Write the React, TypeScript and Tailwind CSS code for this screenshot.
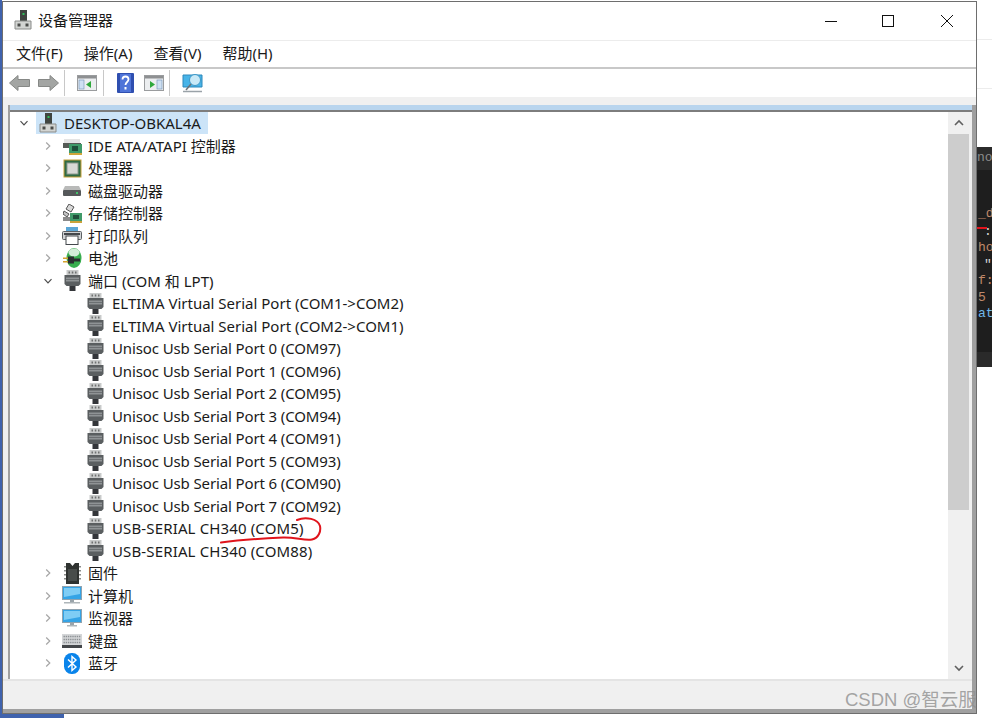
import React from 'react';

const Chevron = ({ open }: { open?: boolean }) => (
  <svg width="10" height="10" viewBox="0 0 10 10" fill="none" stroke={open ? '#4d4d4d' : '#a6a6a6'} strokeWidth="1.2">
    {open ? <path d="M1.5 3.2 5 6.8 8.5 3.2" /> : <path d="M3.2 1.5 6.8 5 3.2 8.5" />}
  </svg>
);

const ComputerIcon = () => (
  <svg width="18" height="20" viewBox="0 0 18 20">
    <rect x="6" y="0" width="7" height="11" fill="#3f4440" />
    <rect x="8.5" y="3" width="2" height="2" fill="#2fc05a" />
    <path d="M1 11h16v8H1z" fill="#d2d4d2" stroke="#8a8c8a" />
    <rect x="3.5" y="13.5" width="3" height="3" fill="#4a4c4a" />
    <rect x="11.5" y="13.5" width="3" height="3" fill="#4a4c4a" />
  </svg>
);

const IdeIcon = () => (
  <svg width="19" height="18" viewBox="0 0 19 18">
    <path d="M1 2h16v5H1z" fill="#e4e4e4" />
    <path d="M0 6h18v5H0z" fill="#555a56" />
    <rect x="6" y="7" width="13" height="9" fill="#3f9a69" />
    <rect x="9" y="9" width="6" height="5" fill="#1f4f3a" />
    <path d="M6 16h13v2H6z" fill="#d0a63a" />
  </svg>
);

const CpuIcon = () => (
  <svg width="19" height="19" viewBox="0 0 19 19">
    <rect x="0.5" y="0.5" width="18" height="18" fill="#c6a03a" />
    <rect x="1.5" y="1.5" width="16" height="16" fill="#2f6b45" />
    <rect x="4" y="4" width="11" height="11" fill="#d8d9d6" stroke="#8e9a90" />
  </svg>
);

const DiskIcon = () => (
  <svg width="18" height="10" viewBox="0 0 18 10">
    <path d="M2 0h14l2 4H0z" fill="#b9bab9" />
    <rect x="0" y="4" width="18" height="6" rx="1" fill="#55585a" />
    <rect x="13" y="6" width="2" height="2" fill="#42c26a" />
  </svg>
);

const StorageIcon = () => (
  <svg width="19" height="19" viewBox="0 0 19 19">
    <path d="M6 0l5 3-3 5-5-3z" fill="#d8d8d8" stroke="#555" />
    <path d="M1 7l5 3-2 3-4-3z" fill="#c4c4c4" stroke="#555" />
    <rect x="0" y="13" width="9" height="4" fill="#8a8a8a" />
    <rect x="7" y="9" width="12" height="8" fill="#3f9a69" />
    <rect x="10" y="11" width="6" height="4" fill="#1f4f3a" />
    <path d="M7 17h12v2H7z" fill="#c9a23a" />
  </svg>
);

const PrinterIcon = () => (
  <svg width="20" height="18" viewBox="0 0 20 18">
    <rect x="4" y="0" width="12" height="5" fill="#5aa6d6" />
    <rect x="0.5" y="4.5" width="19" height="8" rx="1" fill="#cfd2d4" stroke="#5c6064" />
    <rect x="4" y="9" width="12" height="8.5" fill="#fff" stroke="#44484c" />
    <rect x="2" y="6" width="16" height="2" fill="#44484c" />
  </svg>
);

const BatteryIcon = () => (
  <svg width="20" height="22" viewBox="0 0 20 22">
    <ellipse cx="12" cy="11" rx="7.5" ry="10" fill="#38ad4e" />
    <ellipse cx="12" cy="5.500" rx="5.500" ry="4" fill="#d3ecd7" />
    <path d="M6 9.500h6v7H6z" fill="#2b2e30" />
    <path d="M12 11.500h6v3h-6z" fill="#2b2e30" />
    <path d="M1 10.500h5v1.600H1zM1 14h5v1.600H1z" fill="#d4a22e" />
  </svg>
);

const PortIcon = () => (
  <svg width="17" height="21" viewBox="0 0 17 21">
    <path d="M2.500 0h12v5h-12z" fill="#c8caca" />
    <path d="M4.500 1.500h1.500v2H4.500zM7.800 1.500h1.500v2H7.800zM11 1.500h1.500v2H11z" fill="#6f7171" />
    <path d="M0.500 5h16v9l-2 2h-12l-2-2z" fill="#5a5e60" />
    <path d="M2 7.500h13v4H2z" fill="#8f9395" />
    <path d="M2 9.200h13v0.800H2z" fill="#63676a" />
    <rect x="5.500" y="16" width="6" height="5" fill="#34363a" />
  </svg>
);

const FirmwareIcon = () => (
  <svg width="17" height="21" viewBox="0 0 17 21">
    <path d="M2 0h4l2.500 3L11 0h4v21H2z" fill="#2f3230" />
    <path d="M0 3h2v1.500H0zM0 7h2v1.500H0zM0 11h2v1.500H0zM0 15h2v1.500H0zM15 3h2v1.500h-2zM15 7h2v1.500h-2zM15 11h2v1.500h-2zM15 15h2v1.500h-2z" fill="#8a8c8a" />
    <rect x="4" y="6" width="9" height="12" fill="#484c4a" />
  </svg>
);

const MonitorIcon = ({ base }: { base?: boolean }) => (
  <svg width="20" height="19" viewBox="0 0 20 19">
    <rect x="0.5" y="0.5" width="19" height="13" fill="#35a4e6" stroke="#8fa3b0" />
    <path d="M2 2h16v6L2 11z" fill="#7fcdf5" />
    <rect x="8" y="14" width="4" height="2" fill="#9aa4aa" />
    <rect x={base ? 2 : 5} y="16" width={base ? 16 : 10} height="1.500" fill="#aeb6ba" />
  </svg>
);

const KeyboardIcon = () => (
  <svg width="20" height="14" viewBox="0 0 20 14">
    <rect x="0" y="0" width="20" height="14" fill="#d4d6d8" />
    <path d="M1.500 2.500h17M1.500 5.500h17M1.500 8.500h17" stroke="#8c9094" strokeWidth="1.400" strokeDasharray="1.400 0.800" />
    <rect x="0" y="11" width="20" height="3" fill="#44474a" />
  </svg>
);

const BluetoothIcon = () => (
  <svg width="16" height="21" viewBox="0 0 16 21">
    <rect x="0" y="0" width="16" height="21" rx="7.500" fill="#0a84ea" />
    <path d="M4 6.500l8 7.500-4 3.500V3.500l4 3.500-8 7.500" fill="none" stroke="#fff" strokeWidth="1.400" />
  </svg>
);

const HidIcon = () => (
  <svg width="20" height="14" viewBox="0 0 20 14">
    <rect x="0" y="0" width="20" height="14" fill="#c9cbcd" />
  </svg>
);

const ArrowLeft = () => (
  <svg width="21" height="16" viewBox="0 0 21 16">
    <path d="M0.500 8 9 0.500V4.500H20.500V11.500H9V15.500z" fill="#a3a5a3" stroke="#868886" />
  </svg>
);

const ArrowRight = () => (
  <svg width="21" height="16" viewBox="0 0 21 16">
    <path d="M20.500 8 12 0.500V4.500H0.500V11.500H12V15.500z" fill="#a3a5a3" stroke="#868886" />
  </svg>
);

const PaneIcon = ({ flip }: { flip?: boolean }) => (
  <svg width="20" height="16" viewBox="0 0 20 16">
    <rect x="0.500" y="0.500" width="19" height="15" fill="#eceef0" stroke="#9a9c9e" />
    <rect x="1" y="1" width="18" height="2.500" fill="#8e9092" />
    {flip ? (
      <>
        <rect x="13" y="5" width="5" height="9" fill="#cfe0f2" stroke="#6f8fb5" strokeWidth="0.600" />
        <path d="M6 6l5 3.500L6 13z" fill="#2fa83c" />
      </>
    ) : (
      <>
        <rect x="2" y="5" width="5" height="9" fill="#cfe0f2" stroke="#6f8fb5" strokeWidth="0.600" />
        <path d="M14 6 9 9.500l5 3.500z" fill="#2fa83c" />
      </>
    )}
  </svg>
);

const HelpIcon = () => (
  <svg width="17" height="20" viewBox="0 0 17 20">
    <rect x="0" y="0" width="17" height="20" rx="1" fill="#2f4fb0" />
    <rect x="3" y="1" width="11" height="18" fill="#4f74d8" />
    <path d="M5.500 6.500c0-4 6-4 6 0 0 2.500-3 2.500-3 5.500" fill="none" stroke="#fff" strokeWidth="1.800" />
    <rect x="7.500" y="14" width="2" height="2.500" fill="#fff" />
  </svg>
);

const ScanIcon = () => (
  <svg width="21" height="19" viewBox="0 0 21 19">
    <path d="M1 1h19v12H1z" fill="#48b4e8" stroke="#2c88bb" />
    <circle cx="13" cy="6" r="5.500" fill="#c9e9f7" stroke="#3c98c8" />
    <path d="M9 10 4 16" stroke="#6b7378" strokeWidth="1.500" />
    <path d="M1 17.500h19" stroke="#9aa2a8" strokeWidth="1.500" />
  </svg>
);

const rows: { label: string; Icon: React.FC<any>; open?: boolean; iconProps?: any }[] = [
  { label: 'IDE ATA/ATAPI 控制器', Icon: IdeIcon },
  { label: '处理器', Icon: CpuIcon },
  { label: '磁盘驱动器', Icon: DiskIcon },
  { label: '存储控制器', Icon: StorageIcon },
  { label: '打印队列', Icon: PrinterIcon },
  { label: '电池', Icon: BatteryIcon },
  { label: '端口 (COM 和 LPT)', Icon: PortIcon, open: true },
];

const ports = [
  { name: 'ELTIMA Virtual Serial Port (COM1->COM2)', cls: '' },
  { name: 'ELTIMA Virtual Serial Port (COM2->COM1)', cls: '' },
  { name: 'Unisoc Usb Serial Port 0 (COM97)', cls: 'tracking-[-0.12px]' },
  { name: 'Unisoc Usb Serial Port 1 (COM96)', cls: 'tracking-[-0.12px]' },
  { name: 'Unisoc Usb Serial Port 2 (COM95)', cls: 'tracking-[-0.12px]' },
  { name: 'Unisoc Usb Serial Port 3 (COM94)', cls: 'tracking-[-0.12px]' },
  { name: 'Unisoc Usb Serial Port 4 (COM91)', cls: 'tracking-[-0.12px]' },
  { name: 'Unisoc Usb Serial Port 5 (COM93)', cls: 'tracking-[-0.12px]' },
  { name: 'Unisoc Usb Serial Port 6 (COM90)', cls: 'tracking-[-0.12px]' },
  { name: 'Unisoc Usb Serial Port 7 (COM92)', cls: 'tracking-[-0.12px]' },
  { name: 'USB-SERIAL CH340 (COM5)', cls: 'tracking-[0.14px]' },
  { name: 'USB-SERIAL CH340 (COM88)', cls: 'tracking-[0.14px]' },
];

const rowsAfter: { label: string; Icon: React.FC<any>; iconProps?: any }[] = [
  { label: '固件', Icon: FirmwareIcon },
  { label: '计算机', Icon: MonitorIcon, iconProps: { base: true } },
  { label: '监视器', Icon: MonitorIcon },
  { label: '键盘', Icon: KeyboardIcon },
  { label: '蓝牙', Icon: BluetoothIcon },
  { label: '人体学输入设备', Icon: HidIcon },
];

function CategoryRow({ label, Icon, open, iconProps }: { label: string; Icon: React.FC<any>; open?: boolean; iconProps?: any }) {
  return (
    <div className="flex items-center h-[22.5px] whitespace-nowrap">
      <div className="w-[10px] ml-[33px] flex items-center justify-center">
        <Chevron open={open} />
      </div>
      <div className="w-[24px] ml-[7px] flex items-center justify-center shrink-0">
        <Icon {...iconProps} />
      </div>
      <span className="ml-[4px]">{label}</span>
    </div>
  );
}

export default function App() {
  return (
    <div className="relative w-[992px] h-[718px] flex flex-col bg-white overflow-hidden text-[15px] text-[#1a1a1a] font-['Noto_Sans','Noto_Sans_CJK_SC',sans-serif]">
      <div className="flex h-[714px]">
        <div className="w-[2px] bg-[#3f62ad]" />

        <div className="w-[975px] mt-px border border-[#6e6e6e] flex flex-col bg-white">
          {/* title bar */}
          <div className="h-[38px] flex items-center shrink-0">
            <div className="ml-[11px] mb-[2px] w-[18px] flex">
              <ComputerIcon />
            </div>
            <span className="ml-[6px] mb-[2px]">设备管理器</span>
            <div className="ml-auto flex items-center">
              <svg width="14" height="14" viewBox="0 0 14 14" className="mr-[43px]"><path d="M1 7.500h12" stroke="#111" /></svg>
              <svg width="14" height="14" viewBox="0 0 14 14" className="mr-[45px]"><rect x="1.500" y="1.500" width="11" height="11" fill="none" stroke="#111" /></svg>
              <svg width="14" height="14" viewBox="0 0 14 14" className="mr-[22px]"><path d="M1 1l12 12M13 1 1 13" stroke="#111" /></svg>
            </div>
          </div>

          {/* menu */}
          <div className="h-[29px] shrink-0 flex items-center border-t border-t-[#ececec] border-b-2 border-b-[#c8c8c8] pl-[13px] pb-[2px] gap-[21px]">
            <span>文件(F)</span>
            <span>操作(A)</span>
            <span>查看(V)</span>
            <span>帮助(H)</span>
          </div>

          {/* toolbar */}
          <div className="h-[28px] shrink-0 flex items-center pl-[6px]">
            <ArrowLeft />
            <div className="w-[8px]" />
            <ArrowRight />
            <div className="w-px h-[26px] bg-[#c8c8c8] ml-[5px]" />
            <div className="ml-[12px] flex"><PaneIcon /></div>
            <div className="w-px h-[26px] bg-[#c8c8c8] ml-[6px]" />
            <div className="ml-[13px] flex"><HelpIcon /></div>
            <div className="ml-[10px] flex"><PaneIcon flip /></div>
            <div className="w-px h-[26px] bg-[#c8c8c8] ml-[5px]" />
            <div className="ml-[12px] flex"><ScanIcon /></div>
          </div>

          <div className="h-[8px] shrink-0 bg-[#f0f0f0]" />

          {/* main area */}
          <div className="flex-1 min-h-0 flex bg-[#f0f0f0]">
            <div className="flex-1 min-w-0 flex flex-col">
              <div className="flex-1 min-h-0 flex pl-[5px]">
                <div className="flex-1 min-w-0 flex flex-col border-l-2 border-[#a0a0a0]">
                  <div className="h-[5px] shrink-0 bg-[#b9d5ee]" />
                  <div className="h-[2px] shrink-0 bg-[#7d7d7d]" />
                  <div className="flex-1 min-h-0 flex">
                    <div className="flex-1 min-w-0 bg-white overflow-hidden">
                      <div className="flex items-center h-[22.5px] whitespace-nowrap">
                        <div className="w-[10px] ml-[9px] flex items-center justify-center">
                          <Chevron open />
                        </div>
                        <div className="ml-[7px] h-[22px] w-[172px] bg-[#cce4f8] flex items-center pl-[3px]">
                          <ComputerIcon />
                          <span className="ml-[7px]">DESKTOP-OBKAL4A</span>
                        </div>
                      </div>
                      {rows.map(r => <CategoryRow key={r.label} {...r} />)}
                      {ports.map(p => (
                        <div key={p.name} className="flex items-center h-[22.5px] whitespace-nowrap pl-[77px]">
                          <PortIcon />
                          <span className={`ml-[8px] ${p.cls}`}>{p.name}</span>
                        </div>
                      ))}
                      {rowsAfter.map(r => <CategoryRow key={r.label} {...r} />)}
                    </div>

                    {/* scrollbar */}
                    <div className="w-[21px] shrink-0 bg-[#f0f0f0] flex flex-col">
                      <div className="h-[22px] flex items-center justify-center">
                        <svg width="10" height="8" viewBox="0 0 10 8"><path d="M1 6l4-4 4 4" fill="none" stroke="#606060" strokeWidth="1.600" /></svg>
                      </div>
                      <div className="h-[376px] bg-[#cdcdcd]" />
                      <div className="flex-1" />
                      <div className="h-[22px] flex items-center justify-center">
                        <svg width="10" height="8" viewBox="0 0 10 8"><path d="M1 2l4 4 4-4" fill="none" stroke="#606060" strokeWidth="1.600" /></svg>
                      </div>
                    </div>
                    <div className="w-[3px] shrink-0 bg-[#f0f0f0]" />
                  </div>
                </div>
              </div>
              {/* status bar */}
              <div className="h-[30px] shrink-0 bg-[#f0f0f0] border-t-2 border-[#e4e4e4]" />
            </div>
            <div className="w-[4px] shrink-0 bg-[#a0a0a0]" />
          </div>
          <div className="h-[4px] shrink-0 bg-[#a0a0a0]" />
        </div>

        {/* code editor behind the window */}
        <div className="flex-1 min-w-0 flex flex-col overflow-hidden font-['Liberation_Mono',monospace] text-[13px] leading-[16.5px]">
          <div className="h-[40px] border-b border-[#ececec]" />
          <div className="h-[49px] border-b border-[#ececec]" />
          <div className="h-[58px]" />
          <div className="h-[220px] bg-[#1e1e1e] flex flex-col whitespace-nowrap">
            <div className="h-[23px] bg-[#2b2b2b] text-[#8c8c8c] flex items-center">no</div>
            <div className="flex-1 flex flex-col pt-[36px] pl-px text-[#c08a6a]">
              <span>_d</span>
              <span className="relative text-[#d4d4d4] pl-[6px] mt-px">
                :
                <span className="absolute -left-px top-[3px] w-[10px] h-[2px] bg-[#e0141c]" />
              </span>
              <span>ho</span>
              <span className="text-[#d4d4d4] pl-[6px]">"</span>
              <span>f:</span>
              <span>5</span>
              <span className="text-[#6fb7ea]">at</span>
            </div>
            <div className="h-[15px] bg-[#2a2a2a]" />
          </div>
        </div>
      </div>

      <div className="h-[4px] w-[64px] bg-[#3f62ad]" />

      {/* red pen mark */}
      <svg className="absolute left-0 top-0 pointer-events-none" width="992" height="718" viewBox="0 0 992 718" fill="none">
        <path d="M221 542.500C240 540 262 538.500 283 537.500C295 537 305 541 312 539.500C319 538 321 531 320 526C318 519 306 516 297 520" stroke="#e0141c" strokeWidth="2" strokeLinecap="round" />
      </svg>

      {/* watermark */}
      <div className="absolute left-[845px] top-[688px] text-[18.500px] leading-[24px] text-[#8f8f8f]/80 whitespace-nowrap font-['Liberation_Sans','Noto_Sans_CJK_SC',sans-serif]">CSDN @智云服</div>
    </div>
  );
}
